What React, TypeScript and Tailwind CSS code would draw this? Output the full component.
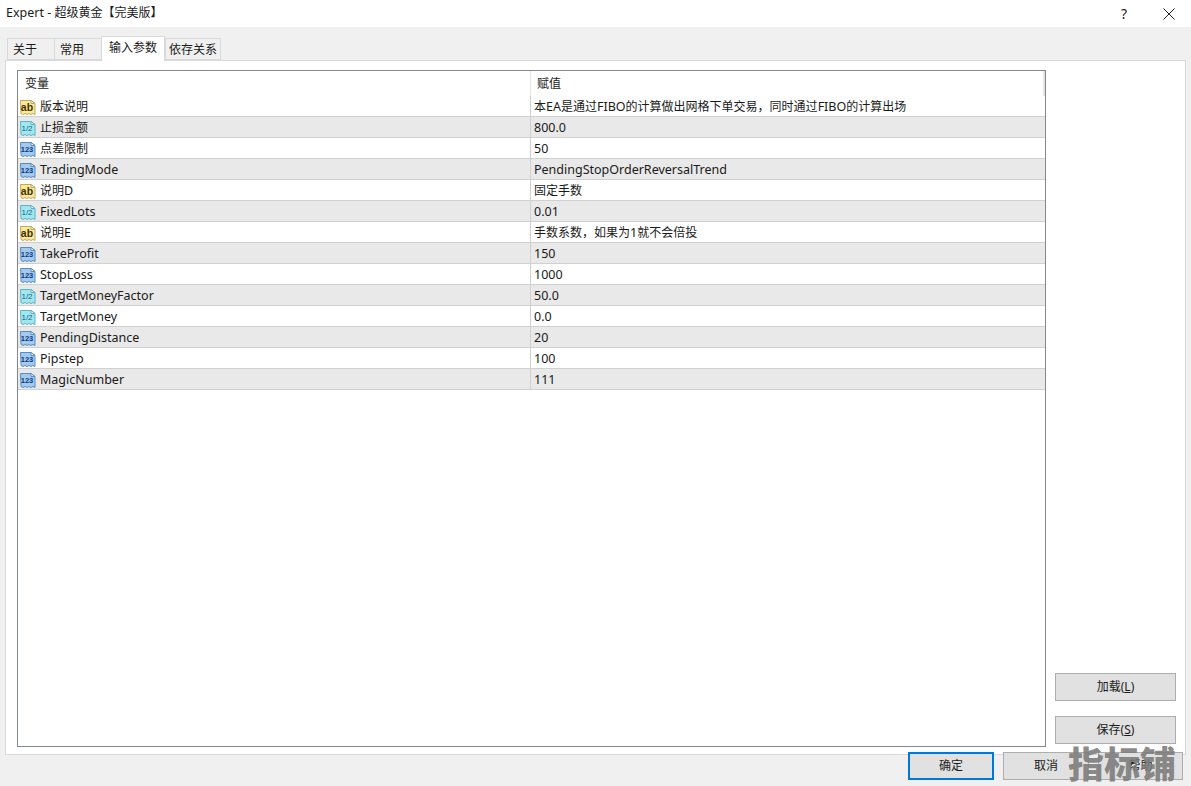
type Kind = "ab" | "half" | "num";

const rows: { kind: Kind; name: string; value: string }[] = [
  { kind: "ab", name: "版本说明", value: "本EA是通过FIBO的计算做出网格下单交易，同时通过FIBO的计算出场" },
  { kind: "half", name: "止损金额", value: "800.0" },
  { kind: "num", name: "点差限制", value: "50" },
  { kind: "num", name: "TradingMode", value: "PendingStopOrderReversalTrend" },
  { kind: "ab", name: "说明D", value: "固定手数" },
  { kind: "half", name: "FixedLots", value: "0.01" },
  { kind: "ab", name: "说明E", value: "手数系数，如果为1就不会倍投" },
  { kind: "num", name: "TakeProfit", value: "150" },
  { kind: "num", name: "StopLoss", value: "1000" },
  { kind: "half", name: "TargetMoneyFactor", value: "50.0" },
  { kind: "half", name: "TargetMoney", value: "0.0" },
  { kind: "num", name: "PendingDistance", value: "20" },
  { kind: "num", name: "Pipstep", value: "100" },
  { kind: "num", name: "MagicNumber", value: "111" },
];

const iconColors: Record<Kind, { fill: string; stroke: string; ink: string; label: string }> = {
  ab: { fill: "#fbe89a", stroke: "#c2ab55", ink: "#3f3200", label: "ab" },
  half: { fill: "#a2e7f0", stroke: "#5fb2c4", ink: "#0f5f85", label: "1/2" },
  num: { fill: "#a3c9ef", stroke: "#5a8dc0", ink: "#0b3a80", label: "123" },
};

// latin runs are 12.5px, cjk runs 12px, same as the dialog font fallback
function Mixed({ text }: { text: string }) {
  const parts = text.match(/[\u3000-\u9fff\uff00-\uffef]+|[^\u3000-\u9fff\uff00-\uffef]+/g) ?? [];
  return (
    <span>
      {parts.map((part, i) =>
        /[\u3000-\u9fff\uff00-\uffef]/.test(part) ? (
          <span key={i} className="text-[12px]">
            {part}
          </span>
        ) : (
          <span key={i}>{part}</span>
        ),
      )}
    </span>
  );
}

function TypeIcon({ kind }: { kind: Kind }) {
  const c = iconColors[kind];
  return (
    <svg width="16" height="17" viewBox="0 0 16 17" className="shrink-0">
      <path
        d="M.5 1.5h10.5l4 3v11l-2-1-2 1-2-1-2 1-2-1-2 1-2-1z"
        fill={c.fill}
        stroke={c.stroke}
      />
      <path d="M11 1.5v3h4z" fill="#fff" stroke={c.stroke} />
      <text
        x="7"
        y={kind === "ab" ? 11.5 : 11}
        textAnchor="middle"
        fontSize={kind === "ab" ? 10.5 : kind === "half" ? 8 : 7.5}
        fontWeight={kind === "half" ? 400 : 700}
        fontFamily="'Liberation Sans', sans-serif"
        fill={c.ink}
      >
        {c.label}
      </text>
    </svg>
  );
}

function Tab({ label, active, width }: { label: string; active?: boolean; width: string }) {
  return (
    <div
      className={
        active
          ? `${width} relative z-10 -mb-px flex h-[25px] items-center justify-center border border-b-0 border-[#d9d9d9] bg-white pb-[3px] text-[12px]`
          : `${width} mt-[2px] flex h-[22px] items-center border border-r-0 border-[#d9d9d9] bg-[#f0f0f0] pl-[5px] pt-[2px] text-[12px]`
      }
    >
      {label}
    </div>
  );
}

function Button({ label, className }: { label: React.ReactNode; className: string }) {
  return (
    <div className={`flex items-center justify-center bg-[#e1e1e1] text-[12px] ${className}`}>{label}</div>
  );
}

export default function App() {
  return (
    <div className="relative flex h-[786px] w-[1191px] flex-col overflow-hidden bg-[#f0f0f0] font-['Noto_Sans','Noto_Sans_CJK_SC',sans-serif] text-[12.5px] text-[#1a1a1a]">
      <div className="flex h-[27px] items-center justify-between bg-white pl-[6px] pr-[16px]">
        <Mixed text="Expert - 超级黄金【完美版】" />
        <div className="flex items-center gap-[36px]">
          <span className="text-[14px]">?</span>
          <svg width="12" height="12" viewBox="0 0 12 12">
            <path d="M.5.5l11 11M11.5.5l-11 11" stroke="#222" fill="none" />
          </svg>
        </div>
      </div>

      <div className="flex h-[33px] items-end pl-[7px]">
        <Tab label="关于" width="w-[47px]" />
        <Tab label="常用" width="w-[47px]" />
        <Tab label="输入参数" active width="w-[64px]" />
        <Tab label="依存关系" width="w-[56px] !border-r !pl-[3px]" />
      </div>

      <div className="mx-[5px] flex h-[695px] border border-[#d9d9d9] bg-white pb-[7px] pl-[11px] pt-[9px]">
        <div className="flex h-[677px] w-[1029px] flex-col border border-[#828790] bg-white">
          <div className="flex h-[25px] shrink-0 items-center text-[12px]">
            <div className="w-[512px] pl-[7px]">变量</div>
            <div className="flex h-full flex-1 items-center border-l border-[#e5e5e5] pl-[6px]">赋值</div>
            <div className="h-full w-[2px] bg-[#e5e5e5]" />
          </div>
          {rows.map((row, i) => (
            <div
              key={row.name}
              className={`flex h-[21px] shrink-0 items-center border-b border-[#d0d0d0] ${
                i % 2 === 1 ? "bg-[#e9e9e9]" : "bg-white"
              }`}
            >
              <div className="flex h-full w-[512px] items-center gap-[4px] pl-[2px] pt-[2px]">
                <TypeIcon kind={row.kind} />
                <Mixed text={row.name} />
              </div>
              <div className="flex h-full flex-1 items-center border-l border-[#d0d0d0] pl-[3px] pt-[2px]">
                <Mixed text={row.value} />
              </div>
            </div>
          ))}
        </div>

        <div className="ml-[9px] flex w-[121px] flex-col justify-end gap-[15px] pb-[3px]">
          <Button label={<>加载(<u>L</u>)</>} className="h-[28px] border border-[#adadad]" />
          <Button label={<>保存(<u>S</u>)</>} className="h-[28px] border border-[#adadad]" />
        </div>
      </div>

      <div className="flex justify-end gap-[9px] pr-[8px]">
        <Button label="确定" className="-mt-[3px] h-[28px] w-[86px] border-2 border-[#0078d7]" />
        <Button label="取消" className="-mt-[3px] h-[28px] w-[86px] border border-[#adadad]" />
        <Button label="帮助" className="-mt-[3px] h-[28px] w-[85px] border border-[#adadad]" />
      </div>

      <div className="absolute left-[1068px] top-[744px] font-['Noto_Sans_CJK_SC',sans-serif] text-[36px] font-black leading-[36px] text-[#7b7b7b]/90">
        指标铺
      </div>
    </div>
  );
}
